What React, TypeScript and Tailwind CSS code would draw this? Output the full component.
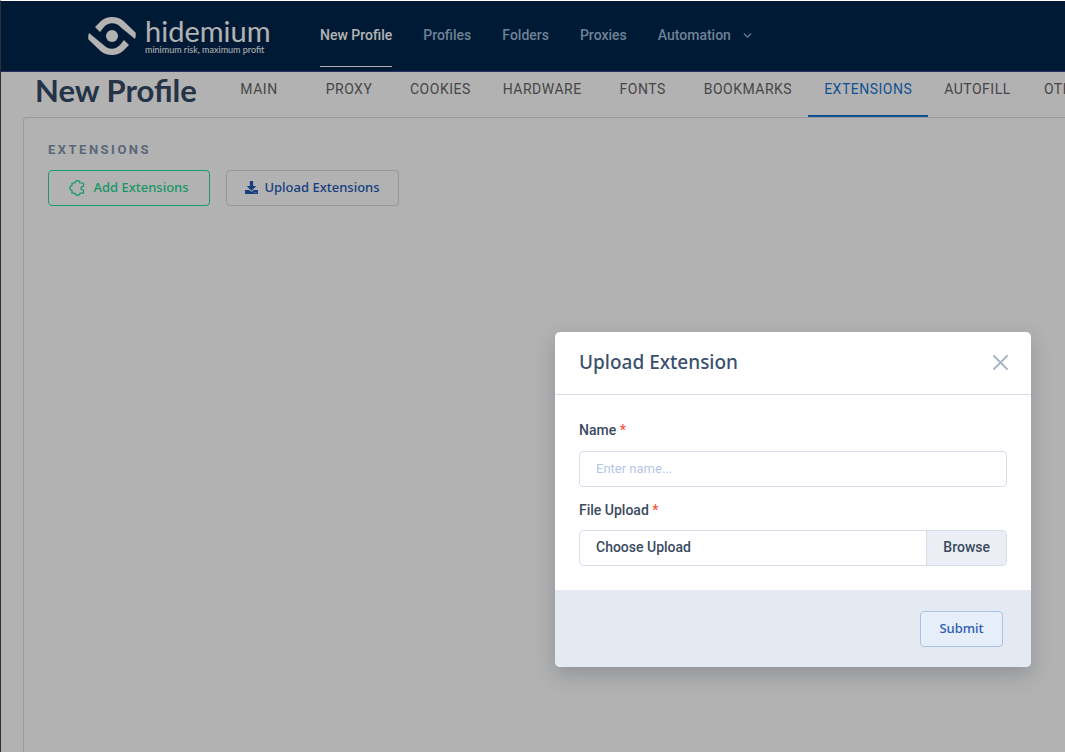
import React from "react";
import { ChevronDown } from "lucide-react";
import { FaDownload } from "react-icons/fa";

const NAV = ["New Profile", "Profiles", "Folders", "Proxies"];

const TABS = [
  "Main",
  "Proxy",
  "Cookies",
  "Hardware",
  "Fonts",
  "Bookmarks",
  "Extensions",
  "Autofill",
  "Others",
];

function Logo() {
  return (
    <a href="#" className="flex w-[181px] shrink-0 items-center gap-[9px] text-white">
      <svg width="48" height="38" viewBox="0 0 48 38" fill="currentColor" aria-hidden="true" className="shrink-0">
        <path d="M7 10 L13 4 Q17.500 0 24 0 Q31 0 35.500 4 L47.500 15.500 Q48.300 18.500 47 22 L33 10.500 Q29 6.300 24 6.300 Q19.500 6.300 16 10 L12 15 Z" />
        <path d="M41 28 L35 34 Q30.500 38 24 38 Q17 38 12.500 34 L0.500 22.500 Q-0.300 19.500 1 16 L15 27.500 Q19 31.700 24 31.700 Q28.500 31.700 32 28 L36 23 Z" />
        <circle cx="24" cy="19" r="6" />
      </svg>
      <span className="flex flex-col font-['Lato',sans-serif]">
        <span className="text-[29px] leading-[27px]">hidemium</span>
        <span className="text-[9px] leading-[11px] whitespace-nowrap">minimum risk, maximum profit</span>
      </span>
    </a>
  );
}

function Header() {
  return (
    <header className="flex h-[71px] shrink-0 items-stretch border-b border-[#3c4390] bg-[#00264c] pl-[87px]">
      <Logo />
      <nav className="ml-[51px] flex gap-[31px] text-sm font-medium whitespace-nowrap text-[#9fb9d6]">
        {NAV.map((item, i) => (
          <a
            key={item}
            href="#"
            className={
              i === 0
                ? "mb-1 flex items-center border-b border-white pt-[2px] text-white"
                : "flex items-center pb-[2px]"
            }
          >
            {item}
          </a>
        ))}
        <a href="#" className="flex items-center gap-[10px] pb-[2px]">
          Automation
          <ChevronDown size={13} strokeWidth={2.5} />
        </a>
      </nav>
    </header>
  );
}

function TabBar() {
  return (
    <div className="flex h-[45px] shrink-0 items-stretch overflow-hidden pl-[34px]">
      <h1 className="w-[179px] shrink-0 font-['Lato',sans-serif] text-[31px] leading-[37px] font-bold whitespace-nowrap text-[#344a66]">
        New Profile
      </h1>
      <div role="tablist" className="flex shrink-0">
        {TABS.map((tab) => (
          <button
            key={tab}
            type="button"
            role="tab"
            aria-selected={tab === "Extensions"}
            className={
              tab === "Extensions"
                ? "min-w-[90px] border-b-2 border-[#1976d2] px-4 pb-[10px] text-sm tracking-[0.5px] text-[#1976d2] uppercase"
                : "min-w-[90px] border-b-2 border-transparent px-4 pb-[10px] text-sm tracking-[0.5px] text-[#666666] uppercase"
            }
          >
            {tab}
          </button>
        ))}
      </div>
    </div>
  );
}

function PuzzleIcon() {
  return (
    <svg width="16" height="16" viewBox="0 0 16 16" fill="none" stroke="currentColor" strokeWidth="1.200" strokeLinejoin="round" aria-hidden="true">
      <path d="M3 3 H6 Q6.300 .7 8.500 .7 Q10.700 .7 11 3 H14.500 V6.300 Q12 6.300 12 8.200 Q12 10 14.500 10 V13.200 H11 Q10.700 15.300 8.500 15.300 Q6.300 15.300 6 13.200 H3 V10.500 Q.8 10.200 .8 8.100 Q.8 6 3 5.800 Z" />
    </svg>
  );
}

function UploadDialog() {
  return (
    <div className="absolute inset-0 flex items-end justify-end bg-black/30 pr-[34px] pb-[85px]">
      <form
        role="dialog"
        aria-labelledby="dialog-title"
        className="w-[476px] overflow-hidden rounded-[5px] bg-white text-sm text-[#3b4a60] shadow-[0_8px_20px_rgba(43,55,72,0.25)]"
      >
        <div className="flex h-[63px] items-center justify-between border-b border-[#d9dcea] pr-[23px] pb-[2px] pl-6">
          <h2 id="dialog-title" className="pt-[2px] font-['Noto_Sans',sans-serif] text-[19px] font-medium text-[#3b506c]">
            Upload Extension
          </h2>
          <button type="button" aria-label="Close" className="text-[#a9b6c8]">
            <svg width="15" height="15" viewBox="0 0 15 15" fill="none" stroke="currentColor" strokeWidth="2" strokeLinecap="round" aria-hidden="true">
              <path d="M1 1 L14 14 M14 1 L1 14" />
            </svg>
          </button>
        </div>
        <div className="px-6 pt-[25px] pb-6">
          <label htmlFor="name" className="block leading-5 font-medium">
            Name <span className="text-[#f0563f]">*</span>
          </label>
          <input
            id="name"
            type="text"
            placeholder="Enter name..."
            className="mt-[11px] block h-9 w-full rounded border border-[#d7deea] px-4 pb-[2px] text-[13px] outline-none placeholder:text-[#b4c6e6]"
          />
          <label htmlFor="file" className="mt-[13px] block leading-5 font-medium">
            File Upload <span className="text-[#f0563f]">*</span>
          </label>
          <label
            htmlFor="file"
            className="mt-[10px] flex h-9 overflow-hidden rounded border border-[#d7deea] font-medium"
          >
            <span className="flex flex-1 items-center pb-[2px] pl-4">Choose Upload</span>
            <span className="flex items-center border-l border-[#d7deea] bg-[#ebeef4] px-4 pb-[2px]">Browse</span>
            <input id="file" type="file" className="sr-only" />
          </label>
        </div>
        <div className="flex h-[77px] items-center justify-end bg-[#e4e9f2] pr-7">
          <button
            type="submit"
            className="h-9 min-w-[83px] rounded border border-[#a9c3e6] bg-[#e6eef9] px-4 pb-px font-['Noto_Sans',sans-serif] text-[13px] font-medium text-[#2c5cb0]"
          >
            Submit
          </button>
        </div>
      </form>
    </div>
  );
}

export default function App() {
  return (
    <div className="flex min-h-screen flex-col overflow-hidden border-t border-l border-t-white border-l-[#2c2e3a] bg-white font-[Roboto,sans-serif]">
      <div className="relative flex flex-1 flex-col">
        <Header />
        <TabBar />
        <main className="ml-[22px] flex-1 rounded-tl border-t border-l border-[#dcdaec] pt-[22px] pl-6">
          <h2 className="text-[13px] leading-5 font-bold tracking-[2.5px] text-[#8296ad] uppercase">Extensions</h2>
          <div className="mt-[10px] flex gap-4 font-['Noto_Sans',sans-serif] text-[13px] font-medium">
            <button
              type="button"
              className="flex h-9 min-w-[162px] items-center justify-center gap-2 rounded border border-[#1ee09a] px-4 pb-px text-[#1fd995]"
            >
              <PuzzleIcon />
              Add Extensions
            </button>
            <button
              type="button"
              className="flex h-9 min-w-[173px] items-center justify-center gap-[6px] rounded border border-[#d8d8d8] px-4 pb-px text-[#1f59b5]"
            >
              <FaDownload size={13} />
              Upload Extensions
            </button>
          </div>
        </main>
        <UploadDialog />
      </div>
    </div>
  );
}
